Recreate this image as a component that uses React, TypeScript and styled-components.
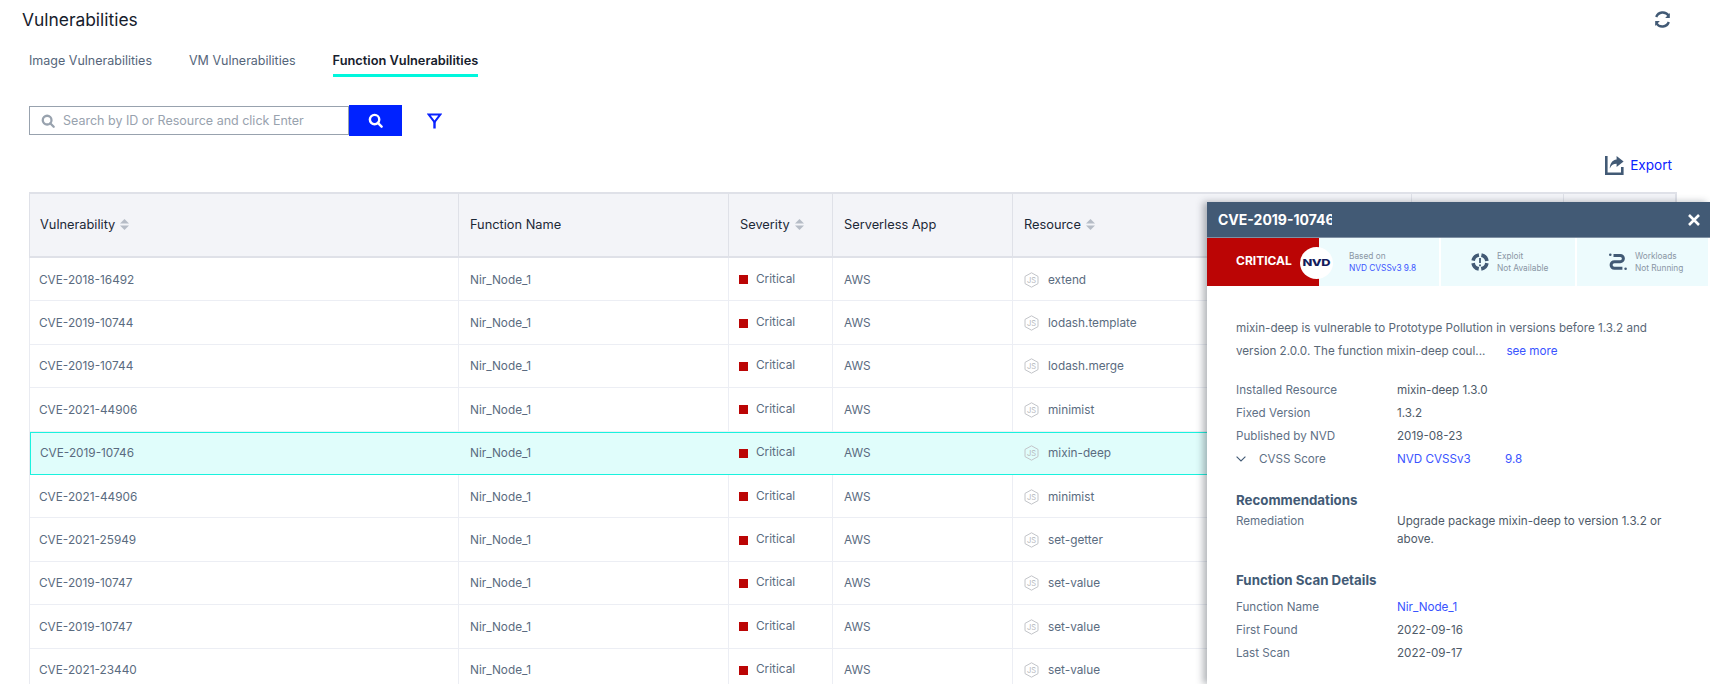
import * as React from "react";
import styled, { createGlobalStyle } from "styled-components";

const GlobalStyle = createGlobalStyle`
  html, body {
    margin: 0;
    height: 684px;
    overflow: hidden;
    background: #fff;
    font-family: Inter, "Noto Sans", sans-serif;
  }
  * { box-sizing: border-box; }
`;

const Page = styled.div`
  position: relative;
  width: 1710px;
  height: 684px;
  overflow: hidden;
`;

const TitleRow = styled.div`
  display: flex;
  justify-content: space-between;
  align-items: center;
  height: 24px;
  margin: 7px 38px 0 22px;
`;

const Title = styled.h1`
  margin: 0;
  font-size: 17.4px;
  font-weight: 400;
  color: #16202c;
`;

const Tabs = styled.nav`
  display: flex;
  gap: 37px;
  margin: 17px 0 0 29px;
`;

const Tab = styled.a<{ $active?: boolean }>`
  height: 29px;
  padding-top: 4px;
  font-size: ${(p) => (p.$active ? "12.8px" : "12.5px")};
  line-height: 18px;
  font-weight: ${(p) => (p.$active ? 600 : 400)};
  color: ${(p) => (p.$active ? "#16202c" : "#55657a")};
  border-bottom: 3px solid ${(p) => (p.$active ? "#00f7dd" : "transparent")};
`;

const SearchRow = styled.div`
  display: flex;
  align-items: center;
  margin: 28px 0 0 29px;
`;

const SearchBox = styled.div`
  display: flex;
  align-items: center;
  gap: 8px;
  width: 320px;
  height: 29px;
  padding-left: 11px;
  border: 1px solid #98a2ae;
  font-size: 12.5px;
  color: #98a2ae;
`;

const SearchButton = styled.button`
  display: flex;
  align-items: center;
  justify-content: center;
  width: 53px;
  height: 31px;
  padding: 0;
  border: 0;
  background: #0022ff;
`;

const FilterButton = styled.span`
  display: flex;
  margin-left: 25px;
`;

const ExportRow = styled.div`
  display: flex;
  justify-content: flex-end;
  align-items: center;
  gap: 6px;
  height: 20px;
  margin: 19px 38px 0 0;
  font-size: 13.6px;
  color: #0a22ff;
`;

const Table = styled.div`
  width: 1648px;
  margin: 17px 0 0 29px;
  border-left: 1px solid #e9ebf1;
`;

const columns = "429px 270px 104px 180px 399px 152px 113px";

const HeadRow = styled.div`
  display: grid;
  grid-template-columns: ${columns};
  height: 66px;
  background: #f3f4f8;
  border: 2px solid #dfe1e8;
  border-left-width: 1px;
  margin-left: -1px;
`;

const HeadCell = styled.div`
  display: flex;
  align-items: center;
  gap: 5px;
  padding: 0 0 2px 12px;
  font-size: 12.8px;
  color: #1c2836;
  border-right: 1px solid #dfe1e8;
  margin-left: -1px;
  &:first-child {
    margin-left: 0;
    padding-left: 10px;
  }
`;

const Row = styled.div<{ $selected?: boolean }>`
  display: grid;
  grid-template-columns: ${columns};
  height: 43.4px;
  align-items: stretch;
  background: ${(p) => (p.$selected ? "#e0fdfb" : "#fff")};
  border-bottom: 1px solid ${(p) => (p.$selected ? "#19f2de" : "#eceef4")};
  box-shadow: ${(p) => (p.$selected ? "inset 0 1px 0 #19f2de, inset 1px 0 0 #19f2de" : "none")};

  & > div:first-child {
    padding-left: ${(p) => (p.$selected ? "10px" : "9px")};
  }
`;

const Cell = styled.div<{ $selected?: boolean }>`
  display: flex;
  align-items: center;
  padding: 1px 0 0 11px;
  font-size: 11.8px;
  color: #5a6b80;
  border-right: 1px solid ${(p) => (p.$selected ? "transparent" : "#eceef4")};
`;

const SeverityDot = styled.span`
  width: 9px;
  height: 9px;
  margin: 0 8px 0 -1px;
  background: #bb0505;
`;

const SeverityLabel = styled.span`
  margin-top: -2px;
`;

const ResourceName = styled.span`
  margin-left: 9px;
`;

const Panel = styled.aside`
  position: absolute;
  top: 202px;
  left: 1207px;
  width: 503px;
  height: 482px;
  background: #fff;
  box-shadow: -4px 0 7px rgba(40, 50, 60, 0.35);
`;

const PanelHead = styled.header`
  display: flex;
  justify-content: space-between;
  align-items: center;
  height: 36px;
  padding: 0 10px 0 11px;
  background: #425a75;
  border-bottom: 1px solid #7f90a3;
`;

const PanelTitle = styled.h2`
  width: 114px;
  margin: 0;
  overflow: hidden;
  white-space: nowrap;
  font-size: 14px;
  font-weight: 700;
  color: #fff;
`;

const Banner = styled.div`
  display: grid;
  grid-template-columns: 234px 136px 133px;
  height: 48px;
  background: #edfbfd;
`;

const BannerCell = styled.div<{ $pad: number }>`
  display: flex;
  align-items: center;
  gap: 8px;
  padding-left: ${(p) => p.$pad}px;
  border-right: 2px solid #fff;
`;

const ScoreCell = styled.div`
  display: flex;
  align-items: center;
  border-right: 2px solid #fff;
`;

const SeverityBlock = styled.div`
  position: relative;
  width: 112px;
  height: 48px;
  padding: 14px 0 0 29px;
  background: #bb0505;
  font-size: 12px;
  font-weight: 700;
  line-height: 18px;
  color: #fff;
`;

const NvdBadge = styled.span`
  position: absolute;
  top: 9px;
  right: -14px;
  display: flex;
  align-items: center;
  justify-content: center;
  width: 33px;
  height: 32px;
  border-radius: 50%;
  background: #fff;
  color: #141c5c;
  font-size: 9.5px;
  font-weight: 800;
  letter-spacing: -0.3px;
`;

const NvdMark = styled.span`
  display: inline-block;
  transform: scaleX(1.35);
`;

const BannerText = styled.div<{ $offset?: boolean }>`
  margin-left: ${(p) => (p.$offset ? "30px" : "0")};
  font-size: 8.3px;
  line-height: 12px;
  color: #8a96a4;
`;

const BannerLink = styled.div`
  color: #3a54ff;
`;

const PanelBody = styled.div`
  padding: 31px 0 0 29px;
`;

const Description = styled.p`
  width: 440px;
  margin: 0 0 18px;
  font-size: 11.65px;
  line-height: 23px;
  color: #5a6877;
`;

const SeeMore = styled.a`
  margin-left: 21px;
  color: #3a54ff;
`;

const InfoRow = styled.div`
  display: grid;
  grid-template-columns: 161px 1fr;
  min-height: 23px;
  font-size: 11.65px;
  line-height: 18px;
  color: #5f7186;
`;

const LabelGroup = styled.div`
  display: flex;
  align-items: flex-start;
`;

const Chevron = styled.span`
  display: flex;
  width: 23px;
  height: 18px;
  align-items: center;
`;

const Value = styled.div`
  width: 290px;
  color: #4e5a68;
`;

const LinkValue = styled.div`
  display: flex;
  color: #3a54ff;
`;

const ScoreLink = styled.span`
  width: 108px;
`;

const SectionTitle = styled.h3<{ $gap: number }>`
  margin: ${(p) => p.$gap}px 0 ${(p) => (p.$gap > 20 ? 9 : 3)}px;
  font-size: 13.3px;
  line-height: 18px;
  font-weight: 700;
  color: #425a75;
`;

const SortIcon = () => (
  <svg width="9" height="11" viewBox="0 0 9 11" fill="#b6bcc6">
    <path d="M4.5 0 9 4.6H0z" />
    <path d="M4.5 11 0 6.4h9z" />
  </svg>
);

const SearchIcon = ({ color, size }: { color: string; size: number }) => (
  <svg width={size} height={size} viewBox="0 0 16 16" fill="none" stroke={color} strokeWidth="2.6">
    <circle cx="7" cy="7" r="5" />
    <path d="m10.5 10.5 4 4" strokeLinecap="round" />
  </svg>
);

const FilterIcon = () => (
  <svg width="15" height="16" viewBox="0 0 15 16" fill="none" stroke="#0a22ff">
    <path d="M1.6 1.4h11.8L7.5 9z" strokeWidth="2" />
    <path d="M7.5 8v7.5" strokeWidth="2.4" />
  </svg>
);

const RefreshIcon = () => (
  <svg width="19" height="19" viewBox="0 0 19 19" fill="none" stroke="#425a75" strokeWidth="2.4">
    <path d="M3.2 7A7 7 0 0 1 15.6 5.6" />
    <path d="M15.8 12A7 7 0 0 1 3.4 13.4" />
    <path d="M16.8 3v5h-4.6z" fill="#425a75" stroke="none" />
    <path d="M2.2 16v-5h4.6z" fill="#425a75" stroke="none" />
  </svg>
);

const ExportIcon = () => (
  <svg width="19" height="19" viewBox="0 0 19 19" fill="#425a75">
    <path d="M0 0h2.6v16.4H16V11h2.6v8H0z" />
    <path d="M11.6 0 18.6 5.6 11.6 11V7.8C8.4 7.8 6.2 9 4.8 12.6 4.8 7.6 7.2 4 11.6 3.4z" />
  </svg>
);

const CloseIcon = () => (
  <svg width="12" height="12" viewBox="0 0 12 12" stroke="#fff" strokeWidth="2.6">
    <path d="m1 1 10 10M11 1 1 11" />
  </svg>
);

const NodeIcon = () => (
  <svg width="15" height="16" viewBox="0 0 15 16" fill="none">
    <path d="M7.5.8 14 4.4v7.2l-6.5 3.6L1 11.6V4.4z" stroke="#c2c4c8" strokeWidth="1" />
    <text x="7.5" y="11" textAnchor="middle" fontSize="7.5" fill="#b4b7bc" fontFamily="Inter, sans-serif">
      JS
    </text>
  </svg>
);

const ExploitIcon = () => (
  <svg width="18" height="18" viewBox="0 0 18 18" fill="none" stroke="#425a75">
    <circle cx="9" cy="9" r="7" strokeWidth="3.6" strokeDasharray="8.5 2.5" strokeDashoffset="-1.2" />
    <path d="M9 5v5M9 11.6v1.6" strokeWidth="1.8" />
  </svg>
);

const WorkloadIcon = () => (
  <svg width="18" height="18" viewBox="0 0 18 18" fill="none" stroke="#425a75" strokeWidth="3">
    <path d="M4.5 2.5h6.8a3.1 3.1 0 0 1 0 6.2H5.4a3.2 3.2 0 0 0 0 6.6h8" />
    <circle cx="1.3" cy="1.8" r="1.3" fill="#425a75" stroke="none" />
    <circle cx="16.6" cy="15.8" r="1.3" fill="#425a75" stroke="none" />
  </svg>
);

const ChevronIcon = () => (
  <svg width="10" height="6" viewBox="0 0 10 6" fill="none" stroke="#425a75" strokeWidth="1.1">
    <path d="m.6.6 4.4 4.4L9.4.6" />
  </svg>
);

const rows = [
  ["CVE-2018-16492", "extend"],
  ["CVE-2019-10744", "lodash.template"],
  ["CVE-2019-10744", "lodash.merge"],
  ["CVE-2021-44906", "minimist"],
  ["CVE-2019-10746", "mixin-deep"],
  ["CVE-2021-44906", "minimist"],
  ["CVE-2021-25949", "set-getter"],
  ["CVE-2019-10747", "set-value"],
  ["CVE-2019-10747", "set-value"],
  ["CVE-2021-23440", "set-value"],
];

const Info = ({ label, value }: { label: string; value: string }) => (
  <InfoRow>
    <div>{label}</div>
    <Value>{value}</Value>
  </InfoRow>
);

function App() {
  return (
    <Page>
      <GlobalStyle />
      <TitleRow>
        <Title>Vulnerabilities</Title>
        <RefreshIcon />
      </TitleRow>

      <Tabs>
        <Tab>Image Vulnerabilities</Tab>
        <Tab>VM Vulnerabilities</Tab>
        <Tab $active>Function Vulnerabilities</Tab>
      </Tabs>

      <SearchRow>
        <SearchBox>
          <SearchIcon color="#98a2ae" size={14} />
          Search by ID or Resource and click Enter
        </SearchBox>
        <SearchButton>
          <SearchIcon color="#fff" size={15} />
        </SearchButton>
        <FilterButton>
          <FilterIcon />
        </FilterButton>
      </SearchRow>

      <ExportRow>
        <ExportIcon />
        Export
      </ExportRow>

      <Table>
        <HeadRow>
          <HeadCell>Vulnerability <SortIcon /></HeadCell>
          <HeadCell>Function Name</HeadCell>
          <HeadCell>Severity <SortIcon /></HeadCell>
          <HeadCell>Serverless App</HeadCell>
          <HeadCell>Resource <SortIcon /></HeadCell>
          <HeadCell />
          <HeadCell />
        </HeadRow>
        {rows.map(([cve, resource], i) => {
          const selected = i === 4;
          return (
            <Row key={i} $selected={selected}>
              <Cell $selected={selected}>{cve}</Cell>
              <Cell $selected={selected}>Nir_Node_1</Cell>
              <Cell $selected={selected}>
                <SeverityDot />
                <SeverityLabel>Critical</SeverityLabel>
              </Cell>
              <Cell $selected={selected}>AWS</Cell>
              <Cell $selected={selected}>
                <NodeIcon />
                <ResourceName>{resource}</ResourceName>
              </Cell>
              <Cell $selected={selected} />
              <Cell $selected={selected} />
            </Row>
          );
        })}
      </Table>

      <Panel>
        <PanelHead>
          <PanelTitle>CVE-2019-10746</PanelTitle>
          <CloseIcon />
        </PanelHead>
        <Banner>
          <ScoreCell>
            <SeverityBlock>
              CRITICAL
              <NvdBadge><NvdMark>NVD</NvdMark></NvdBadge>
            </SeverityBlock>
            <BannerText $offset>
              Based on
              <BannerLink>NVD CVSSv3 9.8</BannerLink>
            </BannerText>
          </ScoreCell>
          <BannerCell $pad={30}>
            <ExploitIcon />
            <BannerText>
              Exploit
              <div>Not Available</div>
            </BannerText>
          </BannerCell>
          <BannerCell $pad={32}>
            <WorkloadIcon />
            <BannerText>
              Workloads
              <div>Not Running</div>
            </BannerText>
          </BannerCell>
        </Banner>
        <PanelBody>
          <Description>
            mixin-deep is vulnerable to Prototype Pollution in versions before 1.3.2 and version 2.0.0. The function mixin-deep coul...
            <SeeMore>see more</SeeMore>
          </Description>
          <Info label="Installed Resource" value="mixin-deep 1.3.0" />
          <Info label="Fixed Version" value="1.3.2" />
          <Info label="Published by NVD" value="2019-08-23" />
          <InfoRow>
            <LabelGroup>
              <Chevron><ChevronIcon /></Chevron>
              CVSS Score
            </LabelGroup>
            <LinkValue>
              <ScoreLink>NVD CVSSv3</ScoreLink>
              9.8
            </LinkValue>
          </InfoRow>

          <SectionTitle $gap={18}>Recommendations</SectionTitle>
          <Info label="Remediation" value="Upgrade package mixin-deep to version 1.3.2 or above." />

          <SectionTitle $gap={23}>Function Scan Details</SectionTitle>
          <InfoRow>
            <div>Function Name</div>
            <LinkValue>Nir_Node_1</LinkValue>
          </InfoRow>
          <Info label="First Found" value="2022-09-16" />
          <Info label="Last Scan" value="2022-09-17" />
        </PanelBody>
      </Panel>
    </Page>
  );
}

export default App;
